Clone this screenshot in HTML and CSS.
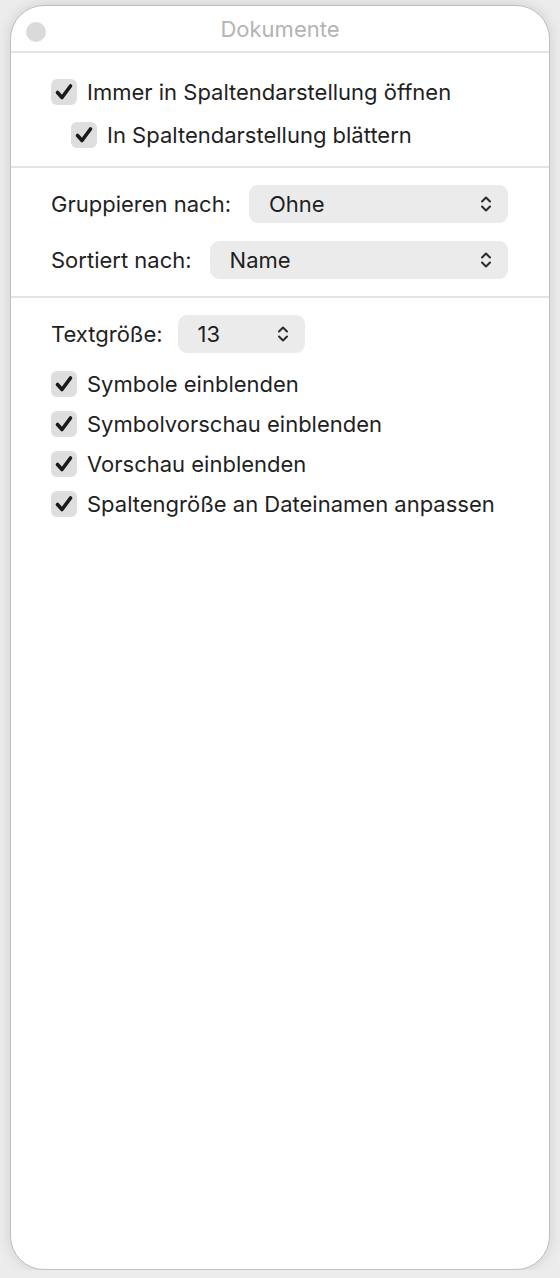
FILE: index.html
```html
<!DOCTYPE html>
<html lang="de">
<head>
  <meta charset="UTF-8" />
  <meta name="viewport" content="width=device-width, initial-scale=1.0"/>
  <title>Dokumente</title>
  <link rel="stylesheet" href="styles.css">
</head>
<body>

<div class="window">
  <div class="titlebar">
    <span class="dot"></span>
    <div class="title">Dokumente</div>
  </div>

  <div class="section first">
    <label class="check">
      <span class="box"><svg viewBox="0 0 26 26"><path d="M6.5 13.5 L11 18.5 L19.5 7"/></svg></span>
      Immer in Spaltendarstellung öffnen
    </label>
    <label class="check sub">
      <span class="box"><svg viewBox="0 0 26 26"><path d="M6.5 13.5 L11 18.5 L19.5 7"/></svg></span>
      In Spaltendarstellung blättern
    </label>
  </div>

  <div class="section popups">
    <div class="row">
      <span class="label">Gruppieren nach:</span>
      <div class="popup wide">
        <span>Ohne</span>
        <svg class="updown" viewBox="0 0 12 18"><path d="M2 6.5 L6 2.5 L10 6.5 M2 11.5 L6 15.5 L10 11.5"/></svg>
      </div>
    </div>
    <div class="row">
      <span class="label">Sortiert nach:</span>
      <div class="popup wide">
        <span>Name</span>
        <svg class="updown" viewBox="0 0 12 18"><path d="M2 6.5 L6 2.5 L10 6.5 M2 11.5 L6 15.5 L10 11.5"/></svg>
      </div>
    </div>
  </div>

  <div class="section last">
    <div class="row tight">
      <span class="label">Textgröße:</span>
      <div class="popup small">
        <span>13</span>
        <svg class="updown" viewBox="0 0 12 18"><path d="M2 6.5 L6 2.5 L10 6.5 M2 11.5 L6 15.5 L10 11.5"/></svg>
      </div>
    </div>
    <div class="checks">
      <label class="check">
        <span class="box"><svg viewBox="0 0 26 26"><path d="M6.5 13.5 L11 18.5 L19.5 7"/></svg></span>
        Symbole einblenden
      </label>
      <label class="check">
        <span class="box"><svg viewBox="0 0 26 26"><path d="M6.5 13.5 L11 18.5 L19.5 7"/></svg></span>
        Symbolvorschau einblenden
      </label>
      <label class="check">
        <span class="box"><svg viewBox="0 0 26 26"><path d="M6.5 13.5 L11 18.5 L19.5 7"/></svg></span>
        Vorschau einblenden
      </label>
      <label class="check">
        <span class="box"><svg viewBox="0 0 26 26"><path d="M6.5 13.5 L11 18.5 L19.5 7"/></svg></span>
        Spaltengröße an Dateinamen anpassen
      </label>
    </div>
  </div>
</div>

</body>
</html>
```

FILE: styles.css
```css
body {
  margin: 0;
  background: #ececec;
  font-family: Inter, "Noto Sans", sans-serif;
  color: #1f1f1f;
}
.window {
  margin: 5px 10px 0;
  height: 1263px;
  background: #fff;
  border: 1px solid #bfbfbf;
  border-radius: 34px;
  box-shadow: 0 0 14px rgba(0,0,0,0.12);
  overflow: hidden;
}
.titlebar {
  position: relative;
  height: 45px;
  border-bottom: 2px solid #e4e4e4;
  display: flex;
  align-items: center;
  justify-content: center;
}
.dot {
  position: absolute;
  left: 15px;
  top: 16px;
  width: 20px;
  height: 20px;
  border-radius: 50%;
  background: #dadada;
}
.title {
  font-size: 22px;
  color: #b4b4b4;
}
.section {
  border-bottom: 2px solid #e4e4e4;
  padding: 17px 40px;
}
.section.first {
  padding-top: 26px;
  padding-bottom: 18px;
  display: flex;
  flex-direction: column;
  gap: 17px;
}
.section.popups {
  display: flex;
  flex-direction: column;
  gap: 18px;
}
.section.last {
  border-bottom: none;
}
.check {
  display: flex;
  align-items: center;
  gap: 10px;
  font-size: 22px;
  height: 26px;
}
.check.sub {
  margin-left: 20px;
}
.box {
  width: 26px;
  height: 26px;
  border-radius: 6px;
  background: #dedede;
  flex: none;
}
.box svg {
  width: 26px;
  height: 26px;
  display: block;
}
.box path {
  fill: none;
  stroke: #1a1a1a;
  stroke-width: 3.6;
  stroke-linecap: round;
  stroke-linejoin: round;
}
.row {
  display: flex;
  align-items: center;
  gap: 18px;
  font-size: 22px;
}
.row.tight {
  gap: 15px;
}
.popup {
  height: 38px;
  border-radius: 9px;
  background: #ebebeb;
  display: flex;
  align-items: center;
  justify-content: space-between;
  padding: 0 16px 0 20px;
  box-sizing: border-box;
}
.popup.wide {
  flex: 1;
  margin-right: 1px;
}
.popup.small {
  width: 127px;
}
.updown {
  width: 12px;
  height: 18px;
}
.updown path {
  fill: none;
  stroke: #2a2a2a;
  stroke-width: 2;
  stroke-linecap: round;
  stroke-linejoin: round;
}
.checks {
  display: flex;
  flex-direction: column;
  gap: 14px;
  margin-top: 18px;
}
```
